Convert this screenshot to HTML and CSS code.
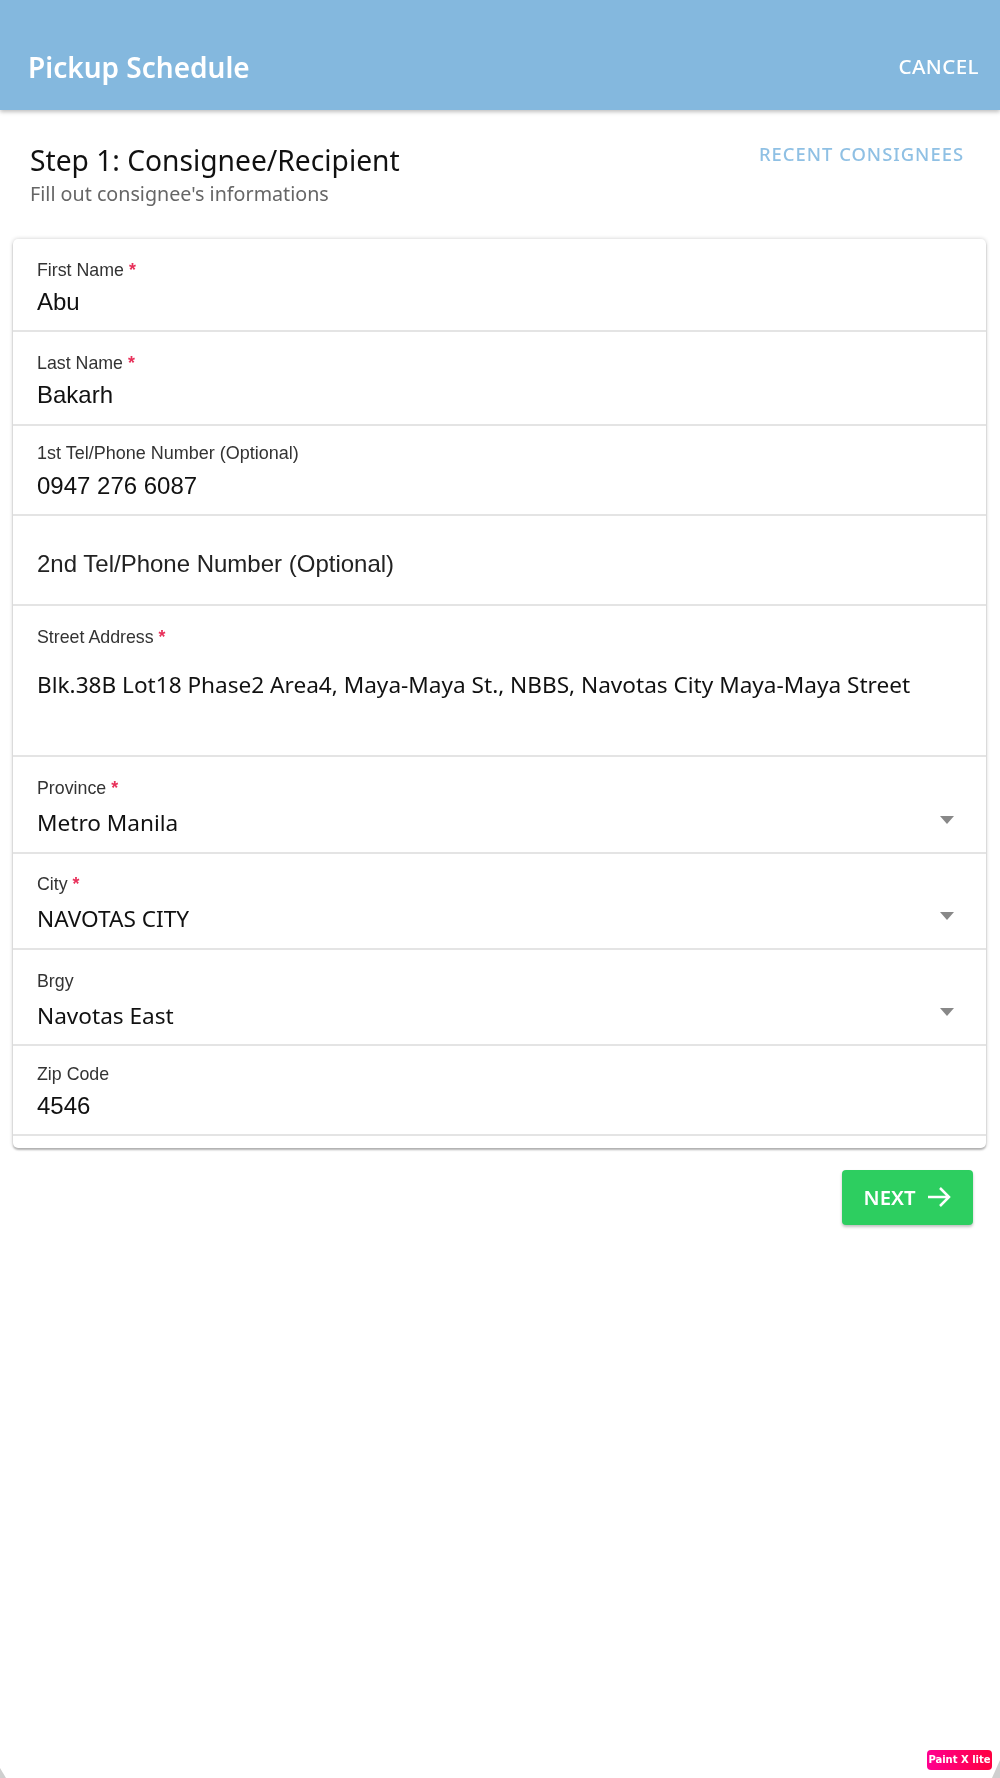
FILE: index.html
```html
<!DOCTYPE html>
<html lang="en">
<head>
<meta charset="utf-8">
<title>Pickup Schedule</title>
<link rel="stylesheet" href="styles.css">
</head>
<body>
<div class="page">
  <header class="appbar">
    <h1 class="appbar-title">Pickup Schedule</h1>
    <span class="appbar-action">CANCEL</span>
  </header>
  <main class="content">
    <div class="step-head">
      <div>
        <h2 class="step-title">Step 1: Consignee/Recipient</h2>
        <p class="step-sub">Fill out consignee's informations</p>
      </div>
      <span class="recent">RECENT CONSIGNEES</span>
    </div>
    <form class="card">
      <div class="row r-h93"><div class="label">First Name <span class="req">*</span></div><div class="value">Abu</div></div>
      <div class="row r-h94"><div class="label">Last Name <span class="req">*</span></div><div class="value">Bakarh</div></div>
      <div class="row r-tel"><div class="label label-wide">1st Tel/Phone Number (Optional)</div><div class="value">0947 276 6087</div></div>
      <div class="row r-empty"><div class="placeholder">2nd Tel/Phone Number (Optional)</div></div>
      <div class="row r-addr"><div class="label">Street Address <span class="req">*</span></div><div class="value noto addr">Blk.38B Lot18 Phase2 Area4, Maya-Maya St., NBBS, Navotas City Maya-Maya Street</div></div>
      <div class="row r-select r-first"><div class="label">Province <span class="req">*</span></div><div class="value noto">Metro Manila</div><span class="caret"></span></div>
      <div class="row r-select"><div class="label">City <span class="req">*</span></div><div class="value noto">NAVOTAS CITY</div><span class="caret"></span></div>
      <div class="row r-select r-brgy"><div class="label">Brgy</div><div class="value noto">Navotas East</div><span class="caret"></span></div>
      <div class="row r-zip"><div class="label">Zip Code</div><div class="value">4546</div></div>
    </form>
    <div class="actions">
      <button type="button" class="next">NEXT
        <svg class="next-icon" viewBox="0 0 24 24" width="24" height="24" aria-hidden="true"><path d="M1 12h20.5M13 3l9 9-9 9" fill="none" stroke="#fff" stroke-width="2.5"/></svg>
      </button>
    </div>
  </main>
  <span class="corner corner-left"></span>
  <span class="corner corner-right"></span>
  <span class="badge">Paint X lite</span>
</div>
</body>
</html>
```

FILE: styles.css
```css
* { box-sizing: border-box; }
html, body { margin: 0; padding: 0; background: #fff; }
.page {
  position: relative;
  height: 1778px;
  overflow: hidden;
  font-family: "Noto Sans", sans-serif;
  color: #111;
  filter: blur(0.6px);
}
.appbar {
  height: 110px;
  background: #84b8de;
  box-shadow: 0 2px 4px rgba(0,0,0,.25);
  display: flex;
  justify-content: space-between;
  align-items: flex-start;
  padding: 48px 21px 0 28px;
  color: #fff;
}
.appbar-title { margin: 0; font-size: 28px; line-height: 38px; font-weight: 600; }
.appbar-action { font-size: 20.6px; line-height: 36px; font-weight: 500; letter-spacing: .4px; }
.content { padding: 0 14px 0 13px; }
.step-head {
  display: flex;
  justify-content: space-between;
  align-items: flex-start;
  padding: 34px 22px 0 17px;
  height: 129px;
}
.step-title { margin: 0; font-size: 28.2px; line-height: 32px; font-weight: 400; color: #111; }
.step-sub { margin: 5px 0 0; font-size: 19.7px; line-height: 26px; color: #666; }
.recent { font-size: 18.4px; line-height: 22px; color: #8fc0e4; font-weight: 500; letter-spacing: 1px; margin-top: -1px; }
.card {
  background: #fff;
  border-radius: 5px;
  height: 909px;
  box-shadow: 0 0 4px rgba(0,0,0,.2), 0 2px 2px rgba(0,0,0,.25);
}
.row {
  position: relative;
  padding: 0 24px;
  border-bottom: 2px solid #e4e4e4;
}
.r-h93 { height: 93px; padding-top: 20px; }
.r-h94 { height: 94px; padding-top: 20px; }
.r-tel { height: 90px; padding-top: 16px; }
.r-empty { height: 90px; padding-top: 32px; }
.r-addr { height: 151px; padding-top: 20px; }
.r-select { height: 96px; padding-top: 19px; }
.r-first { height: 97px; padding-top: 20px; }
.r-brgy { padding-top: 20px; }
.r-zip { height: 90px; padding-top: 17px; }
.label { font-family: "Liberation Sans", sans-serif; font-size: 17.8px; line-height: 22px; color: #333; }
.label-wide { font-size: 18px; }
.req { color: #e8305a; font-weight: 700; }
.value { font-family: "Liberation Sans", sans-serif; font-size: 24px; line-height: 32px; color: #111; margin-top: 5px; }
.r-tel .value { margin-top: 6px; }
.noto { font-family: "Noto Sans", sans-serif; font-size: 22.6px; margin-top: 8px; }
.addr { margin-top: 21px; }
.placeholder { font-family: "Liberation Sans", sans-serif; font-size: 24px; line-height: 32px; color: #222; }
.caret {
  position: absolute;
  right: 32px;
  top: 58px;
  border-left: 7px solid transparent;
  border-right: 7px solid transparent;
  border-top: 8px solid #888;
}
.r-first .caret { top: 59px; }
.actions { display: flex; justify-content: flex-end; padding: 22px 13px 0 0; }
.next {
  width: 131px;
  height: 55px;
  border: 0;
  border-radius: 4px;
  background: #2dce60;
  color: #fff;
  font-family: "Noto Sans", sans-serif;
  font-size: 20.3px;
  font-weight: 600;
  display: flex;
  align-items: center;
  justify-content: center;
  gap: 12px;
  padding: 0 0 2px;
  box-shadow: 0 2px 3px rgba(0,0,0,.25);
}
.next-icon { flex: none; }
.corner { position: absolute; bottom: 0; background: #cfcfcf; }
.corner-left { left: 0; width: 6px; height: 10px; clip-path: polygon(0 0, 100% 100%, 0 100%); }
.corner-right { right: 0; width: 8px; height: 18px; clip-path: polygon(100% 0, 100% 100%, 0 100%); }
.badge {
  position: absolute;
  right: 8px;
  bottom: 8px;
  width: 65px;
  height: 20px;
  border-radius: 4px;
  background: linear-gradient(90deg, #ff0090, #ff0040);
  color: #fff;
  font-family: "DejaVu Sans", sans-serif;
  font-size: 10px;
  font-weight: 700;
  line-height: 20px;
  text-align: center;
}
```
